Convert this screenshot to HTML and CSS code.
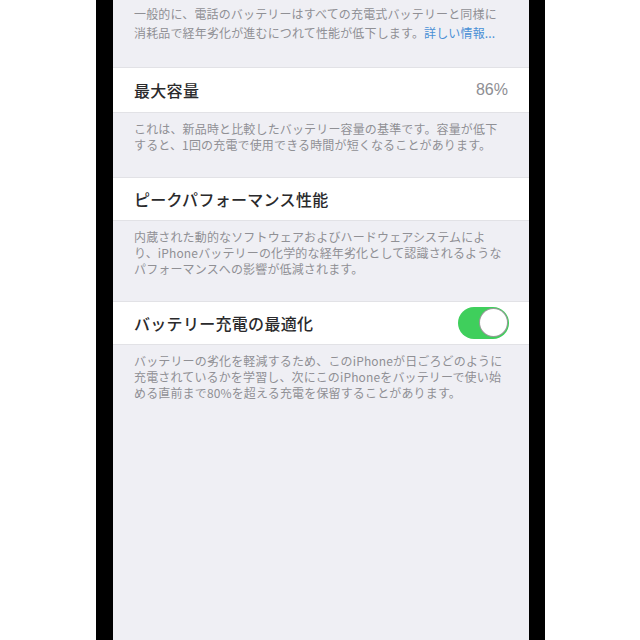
FILE: index.html
```html
<!DOCTYPE html>
<html lang="ja">
<head>
<meta charset="utf-8">
<link rel="stylesheet" href="styles.css">
</head>
<body>
<div class="page">
  <div class="frame">
    <div class="screen">
      <p class="note note-top">一般的に、電話のバッテリーはすべての充電式バッテリーと同様に<br>消耗品で経年劣化が進むにつれて性能が低下します。<span class="link">詳しい情報...</span></p>

      <div class="row row-first">
        <span class="title">最大容量</span>
        <span class="value">86%</span>
      </div>
      <p class="note">これは、新品時と比較したバッテリー容量の基準です。容量が低下<br>すると、1回の充電で使用できる時間が短くなることがあります。</p>

      <div class="row">
        <span class="title">ピークパフォーマンス性能</span>
      </div>
      <p class="note">内蔵された動的なソフトウェアおよびハードウェアシステムによ<br>り、iPhoneバッテリーの化学的な経年劣化として認識されるような<br>パフォーマンスへの影響が低減されます。</p>

      <div class="row">
        <span class="title">バッテリー充電の最適化</span>
        <span class="toggle"><span class="knob"></span></span>
      </div>
      <p class="note">バッテリーの劣化を軽減するため、このiPhoneが日ごろどのように<br>充電されているかを学習し、次にこのiPhoneをバッテリーで使い始<br>める直前まで80%を超える充電を保留することがあります。</p>
    </div>
  </div>
</div>
</body>
</html>
```

FILE: styles.css
```css
html, body {
  margin: 0;
  padding: 0;
  background: #ffffff;
}
.page {
  width: 640px;
  height: 640px;
  display: flex;
  justify-content: center;
  overflow: hidden;
}
.frame {
  margin-left: 1px;
  width: 416px;
  height: 640px;
  border-left: 17px solid #000;
  border-right: 16px solid #000;
  background: #efeff4;
}
.screen {
  height: 100%;
  font-family: "Noto Sans CJK JP", "Noto Sans", sans-serif;
  display: flex;
  flex-direction: column;
}
.note {
  margin: 0;
  padding: 8px 10px 24px 21px;
  font-size: 12px;
  line-height: 16px;
  letter-spacing: 0.15px;
  color: #909095;
  white-space: nowrap;
}
.note-top {
  padding-top: 4px;
  line-height: 19px;
  padding-bottom: 25px;
}
.link {
  color: #4a8fd6;
}
.row {
  height: 44px;
  background: #ffffff;
  border-top: 1px solid #e2e2e6;
  border-bottom: 1px solid #e2e2e6;
  box-sizing: border-box;
  padding: 0 20px 0 21px;
  display: flex;
  align-items: center;
  justify-content: space-between;
}
.row-first {
  height: 46px;
}
.title {
  font-size: 16px;
  font-weight: 500;
  color: #2a2a2c;
  letter-spacing: 0.3px;
}
.value {
  font-family: "Liberation Sans", Arial, sans-serif;
  font-size: 16px;
  color: #8e8e93;
  margin-right: 1px;
}
.toggle {
  width: 51px;
  height: 32px;
  border-radius: 16px;
  background: #3fcf5c;
  position: relative;
  margin-right: 0;
}
.knob {
  position: absolute;
  right: 2px;
  top: 2px;
  width: 27px;
  height: 27px;
  border-radius: 50%;
  background: #fff;
  box-shadow: 0 0 0 1px #9a9a9a;
}
```
